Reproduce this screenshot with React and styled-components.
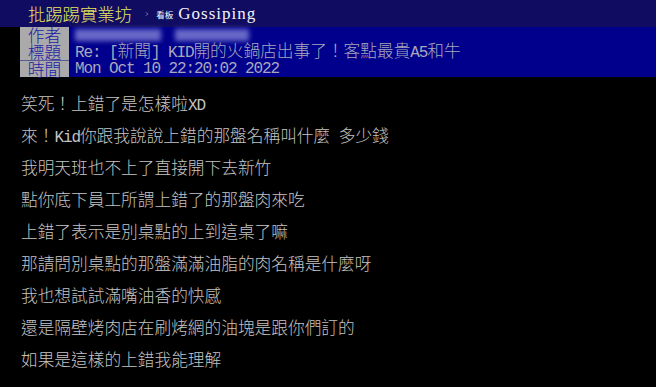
import React from "react";
import styled, { createGlobalStyle } from "styled-components";

const GlobalStyle = createGlobalStyle`
  body {
    margin: 0;
    background: #000;
  }
`;

const Page = styled.div`
  width: 656px;
  height: 387px;
  overflow: hidden;
  background: #000;
  font-family: "Noto Sans CJK TC", sans-serif;
  font-weight: 300;
`;

const TopBar = styled.div`
  display: flex;
  align-items: center;
  height: 27px;
  padding-left: 28px;
  background: #100c62;
`;

const Logo = styled.span`
  font-size: 17.5px;
  letter-spacing: -0.2px;
  color: #e6e65c;
`;

const Crumb = styled.span`
  margin: 0 7px 0 13px;
  font-family: "DejaVu Sans", sans-serif;
  font-size: 11px;
  color: #9a9ab0;
`;

const BoardTag = styled.span`
  font-size: 8.5px;
  color: #fff;
  font-weight: 400;
`;

const BoardName = styled.span`
  margin-left: 5px;
  font-family: "Liberation Serif", serif;
  font-size: 17px;
  letter-spacing: 1px;
  color: #f4f4f4;
`;

const Meta = styled.div`
  display: grid;
  grid-template-columns: 49px 1fr;
  grid-auto-rows: 16.67px;
  margin-left: 20px;
  background: #00008c;
`;

const Label = styled.div`
  background: #aaaaaa;
  color: #1c1ca6;
  text-align: center;
  font-size: 16.7px;
  line-height: 16.67px;
  border-top: ${(p) => (p.$line ? "1px solid #5a5a94" : "none")};
  box-sizing: border-box;
`;

const Value = styled.div`
  display: flex;
  align-items: center;
  gap: 14px;
  padding-left: 6px;
  color: #a8a8bc;
  font-size: 16.7px;
  line-height: 16.67px;
  white-space: pre;
`;

const Blob = styled.span`
  display: block;
  width: ${(p) => p.$w}px;
  height: 12px;
  background: #7a7ad2;
  filter: blur(2.5px);
  opacity: 0.85;
`;

const Half = styled.span`
  font-family: "Liberation Mono", monospace;
  font-size: 16px;
  font-weight: 400;
  letter-spacing: -1.1px;
  line-height: 1;
`;

const Body = styled.div`
  padding: 10px 0 0 21px;
`;

const Line = styled.div`
  height: 32px;
  font-size: 16.7px;
  line-height: 32px;
  color: #c4c4c4;
  white-space: pre;
`;

const lines = [
  ["笑死！上錯了是怎樣啦", <Half key="h">XD</Half>],
  ["來！", <Half key="h">Kid</Half>, "你跟我說說上錯的那盤名稱叫什麼", <Half key="s"> </Half>, "多少錢"],
  ["我明天班也不上了直接開下去新竹"],
  ["點你底下員工所謂上錯了的那盤肉來吃"],
  ["上錯了表示是別桌點的上到這桌了嘛"],
  ["那請問別桌點的那盤滿滿油脂的肉名稱是什麼呀"],
  ["我也想試試滿嘴油香的快感"],
  ["還是隔壁烤肉店在刷烤網的油塊是跟你們訂的"],
  ["如果是這樣的上錯我能理解"],
];

export default function App() {
  return (
    <Page>
      <GlobalStyle />
      <TopBar>
        <Logo>批踢踢實業坊</Logo>
        <Crumb>›</Crumb>
        <BoardTag>看板</BoardTag>
        <BoardName>Gossiping</BoardName>
      </TopBar>
      <Meta>
        <Label>作者</Label>
        <Value>
          <Blob $w={86} />
          <Blob $w={74} />
        </Value>
        <Label>標題</Label>
        <Value>
          <span>
            <Half>Re: [</Half>新聞<Half>] KID</Half>開的火鍋店出事了！客點最貴<Half>A5</Half>和牛
          </span>
        </Value>
        <Label $line>時間</Label>
        <Value>
          <Half>Mon Oct 10 22:20:02 2022</Half>
        </Value>
      </Meta>
      <Body>
        {lines.map((parts, i) => (
          <Line key={i}>{parts}</Line>
        ))}
      </Body>
    </Page>
  );
}
